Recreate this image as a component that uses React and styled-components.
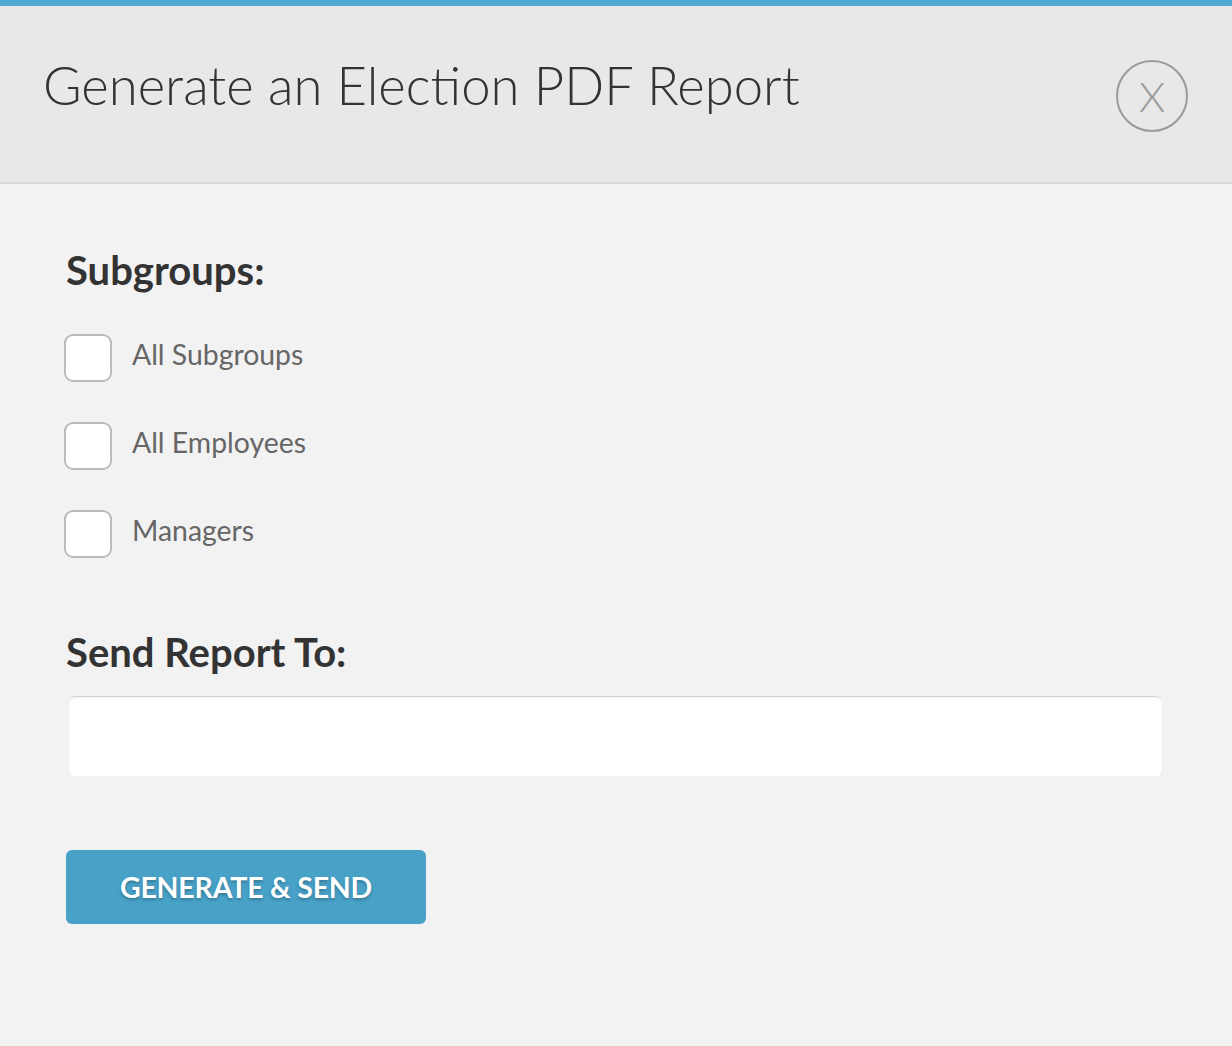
import React from "react";
import styled, { createGlobalStyle } from "styled-components";

const GlobalStyle = createGlobalStyle`
    html, body {
        margin: 0;
        padding: 0;
        background: #f2f2f2;
        font-family: Lato, "Open Sans", sans-serif;
    }
`;

const Modal = styled.div`
    width: 100%;
    min-height: 1046px;
    background: #f2f2f2;
    border-top: 6px solid #4fabd1;
    box-sizing: border-box;
`;

const Header = styled.div`
    height: 176px;
    background: #e8e8e8;
    border-bottom: 2px solid #d8d8d8;
    display: flex;
    align-items: flex-start;
    justify-content: space-between;
    padding: 0 44px 0 43px;
    box-sizing: content-box;
`;

const Title = styled.h1`
    margin: 47px 0 0;
    font-size: 52.6px;
    font-weight: 300;
    color: #333;
    line-height: 1.2;
`;

const CloseButton = styled.button`
    margin-top: 54px;
    width: 72px;
    height: 72px;
    border-radius: 50%;
    border: 2px solid #9a9a9a;
    background: none;
    color: #999;
    font-family: Lato, sans-serif;
    font-weight: 300;
    font-size: 42px;
    display: flex;
    align-items: center;
    justify-content: center;
    padding: 0;
    cursor: pointer;
`;

const Body = styled.div`
    padding: 62px 70px 0 66px;
`;

const SectionTitle = styled.h2`
    margin: 0;
    font-size: 40px;
    font-weight: 700;
    color: #333;
    line-height: 48px;
`;

const Options = styled.div`
    display: flex;
    flex-direction: column;
    gap: 40px;
    margin: 40px 0 0 -2px;
`;

const Option = styled.label`
    display: flex;
    align-items: center;
    gap: 20px;
    cursor: pointer;
`;

const Box = styled.span`
    width: 44px;
    height: 44px;
    border: 2px solid #bcbcbc;
    border-radius: 9px;
    background: #fff;
    flex-shrink: 0;
`;

const OptionText = styled.span`
    font-size: 28.4px;
    color: #666;
    margin-top: -8px;
`;

const SendTitle = styled(SectionTitle)`
    margin-top: 70px;
`;

const EmailInput = styled.input`
    display: block;
    width: 1093px;
    height: 80px;
    margin: 20px 0 0 3px;
    border: none;
    border-top: 1px solid #d4d4d4;
    border-radius: 6px;
    background: #fff;
    box-shadow: inset 0 1px 2px rgba(0, 0, 0, 0.06);
    box-sizing: border-box;
    font-family: Lato, sans-serif;
    font-size: 24px;
    padding: 0 20px;
    outline: none;
`;

const SubmitButton = styled.button`
    margin-top: 74px;
    width: 360px;
    height: 74px;
    border: none;
    border-radius: 6px;
    background: #48a1c7;
    color: #fff;
    font-family: Lato, sans-serif;
    font-weight: 700;
    font-size: 28.5px;
    letter-spacing: -0.2px;
    text-shadow: 0 2px 3px rgba(0, 0, 0, 0.25);
    cursor: pointer;
`;

const subgroups = ["All Subgroups", "All Employees", "Managers"];

export default function App() {
    return (
        <>
            <GlobalStyle />
            <Modal>
                <Header>
                    <Title>Generate an Election PDF Report</Title>
                    <CloseButton aria-label="Close">X</CloseButton>
                </Header>
                <Body>
                    <SectionTitle>Subgroups:</SectionTitle>
                    <Options>
                        {subgroups.map((name) => (
                            <Option key={name}>
                                <Box />
                                <OptionText>{name}</OptionText>
                            </Option>
                        ))}
                    </Options>
                    <SendTitle>Send Report To:</SendTitle>
                    <EmailInput type="text" />
                    <SubmitButton>GENERATE &amp; SEND</SubmitButton>
                </Body>
            </Modal>
        </>
    );
}
